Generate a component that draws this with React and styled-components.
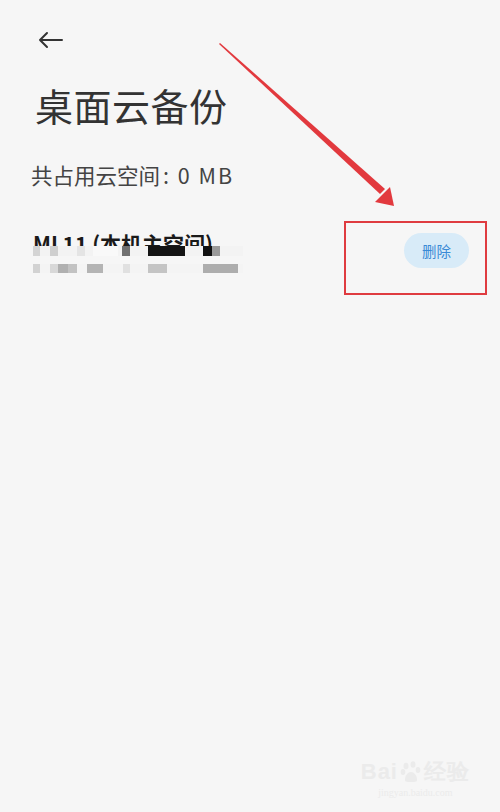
import React from 'react'
import styled, { createGlobalStyle } from 'styled-components'

const Global = createGlobalStyle`
  html, body { margin: 0; padding: 0; background: #f6f6f6; }
  body { font-family: "Noto Sans CJK SC", "Noto Sans", sans-serif; }
`

const Page = styled.div`
  position: relative;
  width: 500px;
  height: 812px;
  overflow: hidden;
  background: #f6f6f6;
`

const TopBar = styled.div`
  height: 70px;
  padding-left: 37px;
  display: flex;
  align-items: center;
  box-sizing: border-box;
  margin-top: 1px;
`

const BackIcon = styled.svg`
  width: 28px;
  height: 28px;
  margin-top: 8px;
`

const Title = styled.h1`
  margin: 9px 0 0 35px;
  font-size: 38px;
  line-height: 50px;
  font-weight: 400;
  color: #333;
  letter-spacing: 0.5px;
`

const Usage = styled.div`
  margin: 31px 0 0 31px;
  font-size: 21.5px;
  line-height: 28px;
  color: #444;
`

const UsageValue = styled.span`
  letter-spacing: 2px;
  margin-left: 3px;
`

const Row = styled.div`
  display: flex;
  align-items: flex-start;
  justify-content: space-between;
  margin-top: 40px;
  padding: 0 31px 0 33px;
`

const Info = styled.div`
  display: flex;
  flex-direction: column;
`

const DeviceName = styled.div`
  font-size: 21px;
  line-height: 28px;
  font-weight: 700;
  color: #1a1a1a;
  height: 17px;
  overflow: hidden;
`

const MosaicLine = styled.div`
  position: relative;
  height: ${p => p.$h}px;
  margin-top: ${p => p.$gap}px;
  width: 210px;
  background: ${p => p.$bg};
`

const Cell = styled.span`
  position: absolute;
  top: 0;
  height: 100%;
  background: ${p => p.$c};
`

const DeleteButton = styled.button`
  margin-top: 4px;
  width: 65px;
  height: 35px;
  border: none;
  border-radius: 18px;
  background: #d8ebf8;
  color: #3a8ad6;
  font-family: "Noto Sans CJK SC", sans-serif;
  font-size: 14.5px;
  padding: 0;
`

const Overlay = styled.svg`
  position: absolute;
  left: 0;
  top: 0;
  pointer-events: none;
`

const HighlightBox = styled.div`
  position: absolute;
  left: 344px;
  top: 221px;
  width: 139px;
  height: 70px;
  border: 2px solid #df3b40;
`

const Watermark = styled.div`
  position: absolute;
  right: 30px;
  bottom: 14px;
  display: flex;
  flex-direction: column;
  align-items: center;
  color: #ebebeb;
  font-family: "Liberation Sans", sans-serif;
`

const WmTop = styled.div`
  display: flex;
  align-items: center;
  gap: 2px;
  font-size: 22px;
  font-weight: 700;
  letter-spacing: 1px;
`

const WmBottom = styled.div`
  font-size: 10px;
  font-family: "Liberation Serif", serif;
`

const line1 = [
  [0, 7, '#d4d4d4'], [17, 8, '#cfcfcf'], [44, 8, '#e4e4e4'], [60, 25, '#f9f9f9'],
  [89, 8, '#707070'], [115, 37, '#141414'], [170, 9, '#111'], [179, 8, '#9a9a9a'],
]
const line2 = [
  [0, 7, '#d2d2d2'], [17, 8, '#d8d8d8'], [25, 10, '#b0b0b0'], [35, 9, '#c2c2c2'],
  [54, 16, '#b4b4b4'], [90, 7, '#e0e0e0'], [115, 19, '#c4c4c4'], [170, 35, '#adadad'],
]

function Mosaic({ cells, h, gap, bg }) {
  return (
    <MosaicLine $h={h} $gap={gap} $bg={bg}>
      {cells.map(([x, w, c], i) => (
        <Cell key={i} $c={c} style={{ left: x, width: w }} />
      ))}
    </MosaicLine>
  )
}

function Paw() {
  return (
    <svg width="22" height="22" viewBox="0 0 22 22" fill="#ebebeb">
      <ellipse cx="6" cy="5" rx="2.5" ry="3.2" />
      <ellipse cx="13" cy="3.5" rx="2.5" ry="3.2" />
      <ellipse cx="3" cy="11" rx="2.3" ry="3" />
      <ellipse cx="18" cy="9" rx="2.3" ry="3" />
      <path d="M5 19c0-5 3-8 6-8s6 3 6 8c0 2-3 2-6 2s-6 0-6-2z" />
    </svg>
  )
}

export default function App() {
  return (
    <Page>
      <Global />
      <TopBar>
        <BackIcon viewBox="0 0 28 28" fill="none" stroke="#333" strokeWidth="2" strokeLinecap="round" strokeLinejoin="round">
          <path d="M25 14H3M10 7l-7 7 7 7" />
        </BackIcon>
      </TopBar>
      <Title>桌面云备份</Title>
      <Usage>共占用云空间<UsageValue>: 0 MB</UsageValue></Usage>
      <Row>
        <Info>
          <DeviceName>MI 11 (本机主空间)</DeviceName>
          <Mosaic cells={line1} h={10} gap={0} bg="#f3f3f3" />
          <Mosaic cells={line2} h={9} gap={8} bg="#f4f4f4" />
        </Info>
        <DeleteButton>删除</DeleteButton>
      </Row>
      <HighlightBox />
      <Overlay width="500" height="812">
        <polygon points="219,44 220,43 385,189 380,194" fill="#e2393e" />
        <polygon points="394,206 375,202 390,187" fill="#e2393e" />
      </Overlay>
      <Watermark>
        <WmTop>Bai<Paw />经验</WmTop>
        <WmBottom>jingyan.baidu.com</WmBottom>
      </Watermark>
    </Page>
  )
}
